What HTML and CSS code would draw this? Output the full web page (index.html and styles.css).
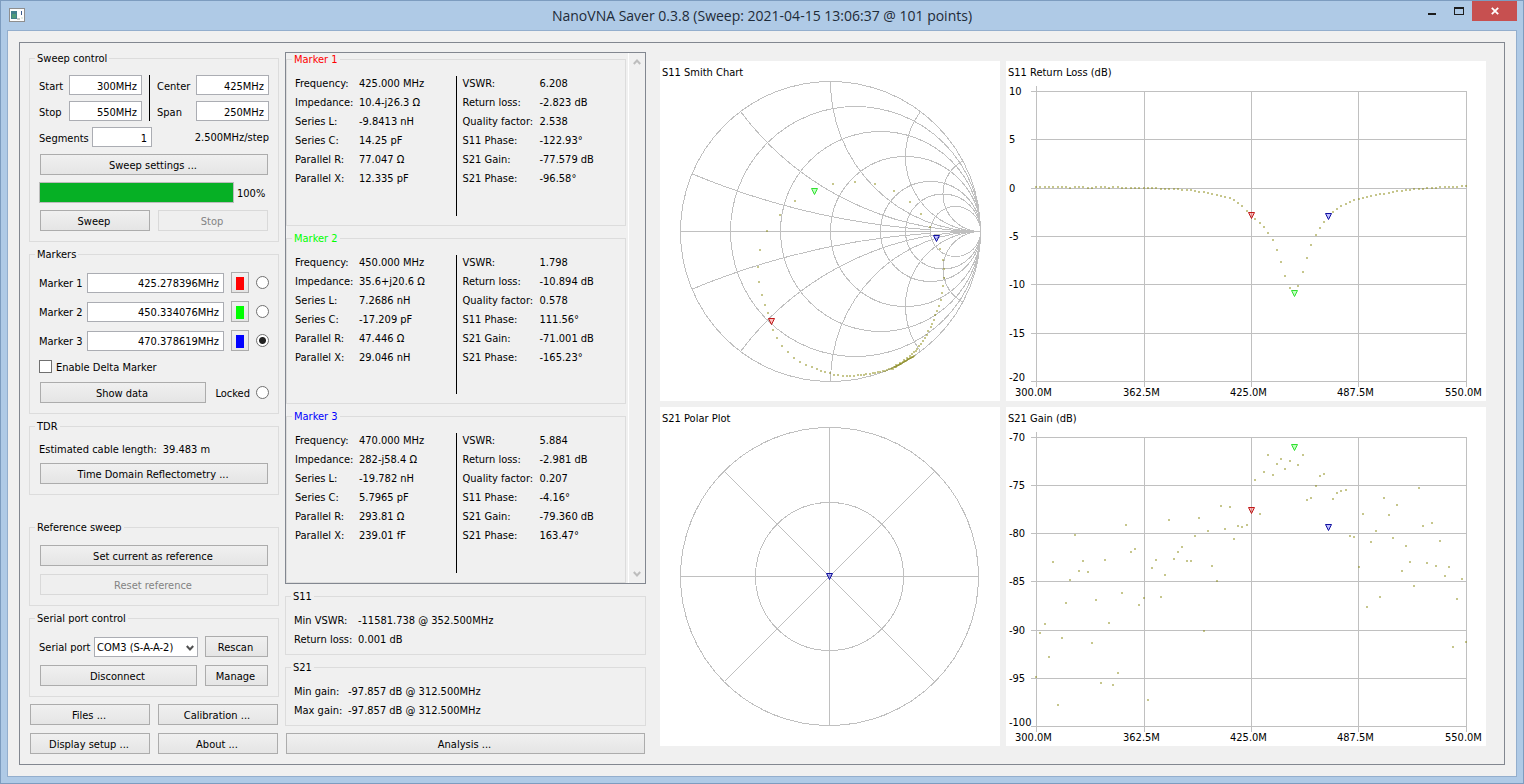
FILE: index.html
```html
<!DOCTYPE html>
<html lang="en">
<head>
<meta charset="utf-8">
<title>NanoVNA Saver 0.3.8</title>
<link rel="stylesheet" href="styles.css">
</head>
<body>
<div class="window">
  <header class="titlebar">
    <svg class="app-icon" width="16" height="14" viewBox="0 0 16 14" shape-rendering="crispEdges" aria-hidden="true">
      <rect width="16" height="14" fill="#8e8e8e"/>
      <rect x="1" y="1" width="14" height="12" fill="#fdfdfd"/>
      <rect x="2" y="3" width="6" height="8" fill="#3f7f8c"/>
      <rect x="3" y="6" width="4" height="4" fill="#4f9a78"/>
      <rect x="12" y="3" width="1" height="4" fill="#3a5a8c"/>
      <rect x="8" y="10" width="3" height="2" fill="#c8c8c8"/>
      <rect x="12" y="9" width="2" height="2" fill="#e4ece4"/>
    </svg>
    <h1 class="title">NanoVNA Saver 0.3.8 (Sweep: 2021-04-15 13:06:37 @ 101 points)</h1>
    <div class="window-controls">
      <button class="win-btn" type="button" aria-label="Minimize"><svg width="12" height="9" viewBox="0 0 12 9" shape-rendering="crispEdges"><rect x="2" y="6" width="8" height="2" fill="#1c1c1c"/></svg></button>
      <button class="win-btn" type="button" aria-label="Maximize"><svg width="12" height="9" viewBox="0 0 12 9" shape-rendering="crispEdges"><path d="M1 0h10v8H1zM2 2v5h8V2z" fill="#1c1c1c" fill-rule="evenodd"/></svg></button>
      <button class="win-btn win-close" type="button" aria-label="Close"><svg width="8" height="8" viewBox="0 0 8 8"><path d="M.8.8 7.2 7.2M7.2.8.8 7.2" stroke="#fff" stroke-width="1.8"/></svg></button>
    </div>
  </header>

  <main class="client">
    <div class="frame">
      <section class="column">
        <fieldset class="group">
          <legend>Sweep control</legend>
          <div class="stack">
            <div class="range-grid">
              <label for="start">Start</label><input class="field" id="start" value="300MHz">
              <span class="divider range-divider"></span>
              <label for="center">Center</label><input class="field" id="center" value="425MHz">
              <label for="stop">Stop</label><input class="field" id="stop" value="550MHz">
              <label for="span">Span</label><input class="field" id="span" value="250MHz">
            </div>
            <div class="row">
              <label class="segments-label" for="segments">Segments</label><input class="field segments" id="segments" value="1">
              <span class="push">2.500MHz/step</span>
            </div>
            <button class="btn" type="button">Sweep settings ...</button>
            <div class="progress-row">
              <progress class="progress" id="sweep-progress" max="100" value="100"></progress>
              <label for="sweep-progress">100%</label>
            </div>
            <div class="pair">
              <button class="btn" type="button">Sweep</button>
              <button class="btn" type="button" disabled>Stop</button>
            </div>
          </div>
        </fieldset>

        <fieldset class="group">
          <legend>Markers</legend>
          <div class="stack">
            <div class="marker-row">
              <label for="m1">Marker 1</label><input class="field" id="m1" value="425.278396MHz">
              <button class="btn swatch red" type="button" aria-label="Marker 1 color"></button>
              <input class="radio" type="radio" name="active" aria-label="Select marker 1">
            </div>
            <div class="marker-row">
              <label for="m2">Marker 2</label><input class="field" id="m2" value="450.334076MHz">
              <button class="btn swatch green" type="button" aria-label="Marker 2 color"></button>
              <input class="radio" type="radio" name="active" aria-label="Select marker 2">
            </div>
            <div class="marker-row">
              <label for="m3">Marker 3</label><input class="field" id="m3" value="470.378619MHz">
              <button class="btn swatch blue" type="button" aria-label="Marker 3 color"></button>
              <input class="radio" type="radio" name="active" aria-label="Select marker 3" checked>
            </div>
            <div class="check-row">
              <input class="check" type="checkbox" id="delta"><label for="delta">Enable Delta Marker</label>
            </div>
            <div class="row">
              <button class="btn grow" type="button">Show data</button>
              <label class="locked" for="locked">Locked</label>
              <input class="radio" type="radio" id="locked" name="locked">
            </div>
          </div>
        </fieldset>

        <fieldset class="group">
          <legend>TDR</legend>
          <div class="stack">
            <div class="row"><span>Estimated cable length:</span><span>39.483 m</span></div>
            <button class="btn" type="button">Time Domain Reflectometry ...</button>
          </div>
        </fieldset>

        <div class="spacer"></div>

        <fieldset class="group">
          <legend>Reference sweep</legend>
          <div class="stack">
            <button class="btn" type="button">Set current as reference</button>
            <button class="btn" type="button" disabled>Reset reference</button>
          </div>
        </fieldset>

        <fieldset class="group">
          <legend>Serial port control</legend>
          <div class="stack">
            <div class="serial-row">
              <div class="row">
                <label class="port-label" for="port">Serial port</label>
                <span class="select-wrap">
                  <select class="select" id="port"><option>COM3 (S-A-A-2)</option></select>
                  <svg class="select-arrow" width="8" height="6" viewBox="0 0 8 6" aria-hidden="true"><path d="M.8 1 4 4.5 7.2 1" fill="none" stroke="#505050" stroke-width="2"/></svg>
                </span>
              </div>
              <button class="btn" type="button">Rescan</button>
            </div>
            <div class="serial-row">
              <button class="btn" type="button">Disconnect</button>
              <button class="btn" type="button">Manage</button>
            </div>
          </div>
        </fieldset>

        <div class="pair">
          <button class="btn" type="button">Files ...</button>
          <button class="btn" type="button">Calibration ...</button>
          <button class="btn" type="button">Display setup ...</button>
          <button class="btn" type="button">About ...</button>
        </div>
      </section>

      <section class="column">
        <div class="scroll-area">
          <div class="readouts">
            <fieldset class="group readout">
              <legend class="text-red">Marker 1</legend>
              <div class="readout-body">
                <dl class="values narrow">
                  <dt>Frequency:</dt><dd>425.000 MHz</dd>
                  <dt>Impedance:</dt><dd>10.4-j26.3 Ω</dd>
                  <dt>Series L:</dt><dd>-9.8413 nH</dd>
                  <dt>Series C:</dt><dd>14.25 pF</dd>
                  <dt>Parallel R:</dt><dd>77.047 Ω</dd>
                  <dt>Parallel X:</dt><dd>12.335 pF</dd>
                </dl>
                <span class="divider"></span>
                <dl class="values wide">
                  <dt>VSWR:</dt><dd>6.208</dd>
                  <dt>Return loss:</dt><dd>-2.823 dB</dd>
                  <dt>Quality factor:</dt><dd>2.538</dd>
                  <dt>S11 Phase:</dt><dd>-122.93°</dd>
                  <dt>S21 Gain:</dt><dd>-77.579 dB</dd>
                  <dt>S21 Phase:</dt><dd>-96.58°</dd>
                </dl>
              </div>
            </fieldset>
            <fieldset class="group readout">
              <legend class="text-green">Marker 2</legend>
              <div class="readout-body">
                <dl class="values narrow">
                  <dt>Frequency:</dt><dd>450.000 MHz</dd>
                  <dt>Impedance:</dt><dd>35.6+j20.6 Ω</dd>
                  <dt>Series L:</dt><dd>7.2686 nH</dd>
                  <dt>Series C:</dt><dd>-17.209 pF</dd>
                  <dt>Parallel R:</dt><dd>47.446 Ω</dd>
                  <dt>Parallel X:</dt><dd>29.046 nH</dd>
                </dl>
                <span class="divider"></span>
                <dl class="values wide">
                  <dt>VSWR:</dt><dd>1.798</dd>
                  <dt>Return loss:</dt><dd>-10.894 dB</dd>
                  <dt>Quality factor:</dt><dd>0.578</dd>
                  <dt>S11 Phase:</dt><dd>111.56°</dd>
                  <dt>S21 Gain:</dt><dd>-71.001 dB</dd>
                  <dt>S21 Phase:</dt><dd>-165.23°</dd>
                </dl>
              </div>
            </fieldset>
            <fieldset class="group readout">
              <legend class="text-blue">Marker 3</legend>
              <div class="readout-body">
                <dl class="values narrow">
                  <dt>Frequency:</dt><dd>470.000 MHz</dd>
                  <dt>Impedance:</dt><dd>282-j58.4 Ω</dd>
                  <dt>Series L:</dt><dd>-19.782 nH</dd>
                  <dt>Series C:</dt><dd>5.7965 pF</dd>
                  <dt>Parallel R:</dt><dd>293.81 Ω</dd>
                  <dt>Parallel X:</dt><dd>239.01 fF</dd>
                </dl>
                <span class="divider"></span>
                <dl class="values wide">
                  <dt>VSWR:</dt><dd>5.884</dd>
                  <dt>Return loss:</dt><dd>-2.981 dB</dd>
                  <dt>Quality factor:</dt><dd>0.207</dd>
                  <dt>S11 Phase:</dt><dd>-4.16°</dd>
                  <dt>S21 Gain:</dt><dd>-79.360 dB</dd>
                  <dt>S21 Phase:</dt><dd>163.47°</dd>
                </dl>
              </div>
            </fieldset>
          </div>
          <div class="scrollbar" aria-hidden="true">
            <svg width="8" height="6" viewBox="0 0 8 6"><path d="M.8 5 4 1.5 7.2 5" fill="none" stroke="#bdbdbd" stroke-width="2"/></svg>
            <svg width="8" height="6" viewBox="0 0 8 6"><path d="M.8 1 4 4.5 7.2 1" fill="none" stroke="#bdbdbd" stroke-width="2"/></svg>
          </div>
        </div>

        <fieldset class="group">
          <legend>S11</legend>
          <dl class="values summary narrow">
            <dt>Min VSWR:</dt><dd>-11581.738 @ 352.500MHz</dd>
            <dt>Return loss:</dt><dd>0.001 dB</dd>
          </dl>
        </fieldset>
        <fieldset class="group">
          <legend>S21</legend>
          <dl class="values summary gain">
            <dt>Min gain:</dt><dd>-97.857 dB @ 312.500MHz</dd>
            <dt>Max gain:</dt><dd>-97.857 dB @ 312.500MHz</dd>
          </dl>
        </fieldset>
        <button class="btn" type="button">Analysis ...</button>
      </section>

      <section class="charts">
        <svg class="chart" viewBox="0 0 340 340">
          <text x="2" y="15">S11 Smith Chart</text>
          <g class="grid">
            <circle cx="170.5" cy="170.5" r="150"/>
            <circle cx="195.5" cy="170.5" r="125"/>
            <circle cx="220.5" cy="170.5" r="100"/>
            <circle cx="245.5" cy="170.5" r="75"/>
            <circle cx="270.5" cy="170.5" r="50"/>
            <circle cx="283" cy="170.5" r="37.5"/>
            <circle cx="295.5" cy="170.5" r="25"/>
            <path d="M20.5 170.5H320.5"/>
            <path d="M32.04 112.81A750 750 0 0 0 270.1 168.8M270.1 172.2A750 750 0 0 0 32.04 228.19"/>
            <path d="M80.5 50.5A300 300 0 0 0 320.5 170.5A300 300 0 0 0 80.5 290.5"/>
            <path d="M170.5 20.5A150 150 0 0 0 320.5 170.5A150 150 0 0 0 170.5 320.5"/>
            <path d="M260.5 50.5A75 75 0 0 0 320.5 170.5A75 75 0 0 0 260.5 290.5"/>
            <path d="M302.85 99.91A37.5 37.5 0 0 0 320.5 170.5A37.5 37.5 0 0 0 302.85 241.09"/>
          </g>
          <g class="dots" id="smith-dots"></g>
          <path class="mark mark-red" d="M108.5 257.5h6l-3 6z"/>
          <path class="mark mark-green" d="M151.5 127.5h6l-3 6z"/>
          <path class="mark mark-blue" d="M273.5 174.5h6l-3 6z"/>
        </svg>

        <svg class="chart" viewBox="0 0 480 340">
          <text x="2" y="15">S11 Return Loss (dB)</text>
          <path class="grid" d="M25 30.5H461M25 78.5H461M25 127.5H461M25 175.5H461M25 223.5H461M25 272.5H461M25 320.5H461M30.5 25V326M138.5 30V326M245.5 30V326M352.5 30V326M460.5 30V326"/>
          <g class="axis">
            <text x="3" y="34">10</text><text x="3" y="82">5</text><text x="3" y="131">0</text><text x="3" y="179">-5</text><text x="3" y="227">-10</text><text x="3" y="276">-15</text><text x="3" y="320">-20</text>
            <text x="9" y="335">300.0M</text><text x="117" y="335">362.5M</text><text x="224" y="335">425.0M</text><text x="331" y="335">487.5M</text><text x="439" y="335">550.0M</text>
          </g>
          <g class="dots" id="loss-dots"></g>
          <path class="mark mark-red" d="M242.5 151.5h6l-3 6z"/>
          <path class="mark mark-green" d="M285.5 229.5h6l-3 6z"/>
          <path class="mark mark-blue" d="M319.5 152.5h6l-3 6z"/>
        </svg>

        <svg class="chart" viewBox="0 0 340 339">
          <text x="2" y="15">S21 Polar Plot</text>
          <g class="grid">
            <circle cx="169.5" cy="169.5" r="149"/>
            <circle cx="169.5" cy="169.5" r="74"/>
            <path d="M20.5 169.5H318.5M169.5 20.5V318.5M64.5 64.5 274.5 274.5M274.5 64.5 64.5 274.5"/>
          </g>
          <path class="mark mark-blue" d="M166.5 166.5h6l-3 6z"/>
        </svg>

        <svg class="chart" viewBox="0 0 480 339">
          <text x="2" y="15">S21 Gain (dB)</text>
          <path class="grid" d="M25 30.5H461M25 78.5H461M25 126.5H461M25 174.5H461M25 223.5H461M25 271.5H461M25 319.5H461M30.5 25V325M138.5 30V325M245.5 30V325M352.5 30V325M460.5 30V325"/>
          <g class="axis">
            <text x="3" y="34">-70</text><text x="3" y="82">-75</text><text x="3" y="130">-80</text><text x="3" y="178">-85</text><text x="3" y="227">-90</text><text x="3" y="275">-95</text><text x="3" y="319">-100</text>
            <text x="9" y="334">300.0M</text><text x="117" y="334">362.5M</text><text x="224" y="334">425.0M</text><text x="331" y="334">487.5M</text><text x="439" y="334">550.0M</text>
          </g>
          <g class="dots" id="gain-dots"></g>
          <path class="mark mark-red" d="M242.5 100.5h6l-3 6z"/>
          <path class="mark mark-green" d="M285.5 37.5h6l-3 6z"/>
          <path class="mark mark-blue" d="M319.5 117.5h6l-3 6z"/>
        </svg>
      </section>
    </div>
  </main>
</div>
<script src="charts.js"></script>
</body>
</html>
```

FILE: styles.css
```css
* { box-sizing: border-box; }

body {
  margin: 0;
  font: 11px/13px "DejaVu Sans Condensed", "DejaVu Sans", sans-serif;
  color: #000;
}

.window {
  min-height: 100vh;
  display: flex;
  flex-direction: column;
  padding: 0 6px 6px;
  border: 1px solid #7d9cbf;
  background: #afcae6;
}

/* Title bar */
.titlebar {
  display: grid;
  grid-template-columns: 1fr auto 1fr;
  height: 29px;
}
.app-icon { margin: 7px 0 0 2px; }
.title {
  margin: 0;
  font: 400 14px/29px "Open Sans", "Noto Sans", sans-serif;
  color: #1e2a38;
}
.window-controls {
  display: flex;
  justify-content: flex-end;
  align-items: flex-start;
}
.win-btn {
  display: flex;
  justify-content: center;
  align-items: center;
  width: 27px;
  height: 20px;
  padding: 0;
  border: 0;
  background: none;
}
.win-close { width: 45px; background: #c75050; }

.client {
  flex: 1;
  display: flex;
  padding: 11px;
  border: 1px solid #93aecd;
  background: #f0f0f0;
}
.frame {
  flex: 1;
  display: grid;
  grid-template-columns: 250px 361px minmax(0, 1fr);
  gap: 6px;
  padding: 9px;
  border: 1px solid #828790;
}
.column {
  display: flex;
  flex-direction: column;
  gap: 6px;
}
.spacer { flex: 1; }

/* Group boxes */
.group {
  min-width: 0;
  margin: 0;
  padding: 0;
  border: 1px solid #dcdcdc;
}
.group legend { margin-left: 5px; padding: 0 2px; }
.stack {
  display: flex;
  flex-direction: column;
  gap: 6px;
  padding: 10px 9px 9px;
}
.row, .check-row, .progress-row {
  display: flex;
  align-items: center;
  gap: 6px;
}
.push { margin-left: auto; }
.grow { flex: 1; }
.pair {
  display: grid;
  grid-template-columns: 1fr 1fr;
  gap: 6px;
}
.range-grid {
  display: grid;
  grid-template-columns: 24px 1fr 3px 33px 1fr;
  align-items: center;
  gap: 6px;
}
.divider { width: 1px; background: #000; }
.range-divider {
  grid-area: 1 / 3 / 3 / 4;
  align-self: stretch;
  justify-self: center;
}
.marker-row {
  display: grid;
  grid-template-columns: 42px 1fr 20px 13px;
  align-items: center;
  gap: 6px;
}
.serial-row {
  display: grid;
  grid-template-columns: 1fr 65px;
  gap: 6px;
}
.check-row { height: 17px; gap: 4px; }
.progress-row { gap: 3px; }
.progress-row label { width: 32px; }
.segments-label { width: 47px; }
.port-label { width: 49px; }
.locked { width: 37px; text-align: right; }
label { padding-top: 2px; white-space: nowrap; }

/* Controls */
.field {
  width: 100%;
  min-width: 0;
  height: 20px;
  padding: 2px 4px 0;
  border: 1px solid #abadb3;
  background: #fff;
  font: inherit;
  text-align: right;
}
.segments { width: 60px; }
.btn {
  height: 21px;
  margin: 1px;
  padding: 2px 6px 0 4px;
  border: 1px solid #acacac;
  background: linear-gradient(#f0f0f0, #e5e5e5);
  font: inherit;
  color: #000;
}
.btn:disabled {
  border-color: #d9d9d9;
  background: #efefef;
  color: #838383;
}
.swatch {
  display: flex;
  justify-content: center;
  align-items: center;
  padding: 2px 1px 0 0;
}
.swatch::before {
  content: "";
  width: 8px;
  height: 13px;
}
.swatch.red::before { background: #f00; }
.swatch.green::before { background: #0f0; }
.swatch.blue::before { background: #00f; }
.radio, .check {
  appearance: none;
  width: 13px;
  height: 13px;
  margin: 0;
  border: 1px solid #707070;
  background: #fff;
}
.radio { border-radius: 50%; }
.radio:checked { background: radial-gradient(circle, #222 3px, #fff 4px); }
.progress {
  appearance: none;
  flex: 1;
  min-width: 0;
  height: 21px;
  border: 1px solid #bcbcbc;
  background: #e6e6e6;
}
.progress::-webkit-progress-bar { background: #e6e6e6; }
.progress::-webkit-progress-value { background: #06b025; }
.select-wrap { position: relative; flex: 1; }
.select {
  display: block;
  appearance: none;
  width: 100%;
  height: 20px;
  padding: 2px 2px 0;
  border: 1px solid #abadb3;
  border-radius: 0;
  background: #fff;
  font: inherit;
  color: #000;
}
.select-arrow {
  position: absolute;
  top: 8px;
  right: 4px;
  pointer-events: none;
}

/* Marker readouts */
.scroll-area {
  flex: 1;
  display: flex;
  gap: 2px;
  border: 1px solid #828790;
}
.readouts {
  flex: 1;
  display: flex;
  flex-direction: column;
  gap: 6px;
}
.readout { flex: 1; }
.readout-body {
  display: grid;
  grid-template-columns: 1fr 1px 1fr;
  gap: 6px;
  height: 100%;
  padding: 10px 8px 9px;
}
.scrollbar {
  width: 17px;
  display: flex;
  flex-direction: column;
  justify-content: space-between;
  align-items: center;
  padding: 6px 0;
  border-left: 1px solid #fff;
}
.values {
  display: grid;
  align-content: start;
  gap: 6px;
  margin: 0;
  padding-top: 1px;
  white-space: nowrap;
}
.values dd { margin: 0; }
.narrow { grid-template-columns: 58px 1fr; }
.wide { grid-template-columns: 71px 1fr; }
.gain { grid-template-columns: 48px 1fr; }
.summary { padding: 11px 8px 8px; }
.text-red { color: #f00; }
.text-green { color: #0f0; }
.text-blue { color: #00f; }

/* Charts */
.charts {
  display: grid;
  grid-template-columns: 340fr 480fr;
  align-content: start;
  gap: 6px;
  padding: 9px 9px 9px 8px;
}
.chart {
  display: block;
  width: 100%;
  background: #fff;
}
.grid {
  fill: none;
  stroke: #c0c0c0;
  shape-rendering: crispEdges;
}
.dots {
  fill: #808000;
  fill-opacity: 0.45;
  shape-rendering: crispEdges;
}
.mark { fill-opacity: 0.25; }
.mark-red { fill: #f00; stroke: #c01818; }
.mark-green { fill: #0f0; stroke: #30e030; }
.mark-blue { fill: #00f; stroke: #1010a0; }
```

FILE: charts.js
```js
// Sweep samples in chart units; null marks a sample covered by a marker.
const smith = [
  [173,123],[195,121],[215,123],[234,130],[250,141],[261,153],[270,166],[280,188],[283,199],[284,208],
  [284,217],[283,225],[282,232],[281,239],[279,245],[277,250],[275,254],[274,259],[272,263],[271,266],
  [268,270],[267,274],[265,277],[263,280],[261,283],[259,285],[257,288],[256,290],[254,291],[252,293],
  [135,140],[120,154],[107,170],[100,189],[98,206],[99,221],[102,234],[105,244],[108,252],[113,269],
  [117,277],[122,285],[128,291],[134,297],[140,301],[146,304],[152,306],[157,308],[161,310],[165,311],
  [170,312],[174,314],[178,314],[183,315],[187,315],[190,315],[194,315],[198,314],[201,314],[204,314],
  [206,313],[210,313],[213,312],[215,312],[218,311],[220,311],[223,310],[225,310],[227,309],[229,308],
  [231,308],[232,307],[233,308],[234,306],[235,306],[236,306],[237,305],[238,304],[239,304],[240,303],
  [241,303],[242,302],[243,301],[244,301],[245,300],[246,300],[247,299],[248,298],[249,298],[250,297],
  [251,297],[252,296],[253,296],[254,295],[236,304],[240,302],[244,299],[247,297],[250,295]
];

const loss = [
  126,126,126,126,126,126,126,126,127,126,126,126,127,127,126,126,126,127,126,126,
  127,127,127,127,127,127,127,127,127,128,128,128,128,128,129,129,129,130,131,131,
  132,133,134,135,136,137,139,142,145,150,null,158,162,166,172,179,189,201,215,227,
  null,225,211,197,184,174,167,161,null,151,148,145,143,141,139,138,137,136,135,134,
  133,133,132,131,130,130,129,129,128,128,128,127,127,127,126,126,126,126,126,125,125
];

const gain = [
  270,226,217,250,155,298,231,196,173,128,164,154,165,236,193,276,153,216,278,266,
  186,118,145,142,198,191,293,161,153,190,168,113,152,145,140,154,154,129,111,224,
  124,159,174,99,122,100,132,119,120,118,null,73,107,65,48,68,57,52,62,54,
  null,58,48,93,91,79,69,67,null,92,86,84,83,129,130,160,107,200,135,124,
  190,91,108,131,98,164,139,155,179,81,119,156,116,159,134,169,160,240,192,172,235
];

function drawDots(id, points) {
  const group = document.getElementById(id);
  for (const [x, y] of points) {
    const dot = document.createElementNS("http://www.w3.org/2000/svg", "rect");
    dot.setAttribute("x", x - 1);
    dot.setAttribute("y", y - 1);
    dot.setAttribute("width", 2);
    dot.setAttribute("height", 2);
    group.appendChild(dot);
  }
}

function overFrequency(samples) {
  return samples
    .map((y, i) => [Math.round(30 + i * 4.3), y])
    .filter(([, y]) => y !== null);
}

drawDots("smith-dots", smith);
drawDots("loss-dots", overFrequency(loss));
drawDots("gain-dots", overFrequency(gain));
```
